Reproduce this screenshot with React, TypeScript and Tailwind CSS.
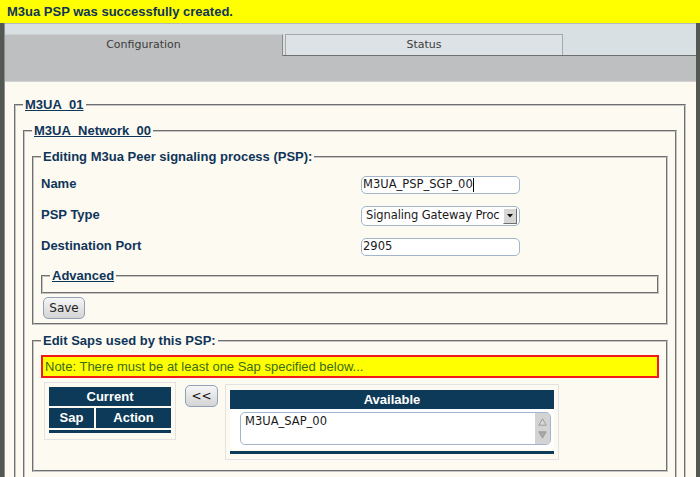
import React from "react";

function Legend({ children, link }: { children: React.ReactNode; link?: boolean }) {
  return (
    <legend
      className={
        link
          ? "px-[2px] text-[13px] leading-[15px] font-bold text-[#0f3559] underline"
          : "px-[2px] text-[13px] leading-[15px] font-bold text-[#0f3559]"
      }
    >
      {children}
    </legend>
  );
}

const fs = "border-2 [border-style:groove] border-[#c4c4c4] min-w-0";

function Label({ children }: { children: React.ReactNode }) {
  return (
    <div className="flex items-center pb-[2px] text-[13px] leading-[15px] font-bold text-[#0f3559]">
      {children}
    </div>
  );
}

export default function App() {
  return (
    <div className="w-[700px] h-[477px] overflow-hidden bg-[#545853] font-['Liberation_Sans',Arial,sans-serif] flex flex-col">
      <div className="h-[23px] shrink-0 bg-[#ffff00] pl-[7px] text-[13px] leading-[24px] font-bold text-[#0f3559]">
        M3ua PSP was successfully created.
      </div>
      <div className="mx-[4px] flex-1 flex flex-col border-l border-[#8f8f8f] min-h-0">
        {/* tab strip */}
        <div className="h-[33px] shrink-0 bg-[#d9e0e3] border-t border-[#b3b8ba] flex items-end">
          <div className="w-[278px] h-[22px] bg-[#bebfc0] border-t border-r border-t-[#d0d0d0] border-r-[#8a8a8a] flex items-center justify-center font-['DejaVu_Sans',sans-serif] text-[11px] text-[#3c3c3c]">
            Configuration
          </div>
          <div className="flex-1 h-[22px] flex items-end border-b border-[#6f6f6f]">
            <div className="ml-[2px] w-[278px] h-[21px] bg-[#dce2e5] border-t border-l border-r border-[#a9a9a9] flex items-center justify-center font-['DejaVu_Sans',sans-serif] text-[11px] text-[#3c3c3c]">
              Status
            </div>
          </div>
        </div>
        <div className="h-[26px] shrink-0 bg-[#bebfc0] border-b border-[#d2d2d2]" />
        {/* content */}
        <div className="flex-1 bg-[#fdfaf2] pt-[15px] pl-[9px] pr-[10px] min-h-0">
          <fieldset className={fs + " px-[7px] pt-[11px] pb-[10px]"}>
            <Legend link>M3UA_01</Legend>
            <fieldset className={fs + " px-[7px] pt-[11px] pb-[10px]"}>
              <Legend link>M3UA_Network_00</Legend>
              <fieldset className={fs + " px-[7px] pt-[5px] pb-[4px]"}>
                <Legend>Editing M3ua Peer signaling process (PSP):</Legend>
                <div className="grid grid-cols-[320px_159px] auto-rows-[31px]">
                  <Label>Name</Label>
                  <div className="flex items-center">
                    <div className="w-[159px] h-[18px] rounded-[5px] border border-[#a3b5c9] bg-white pl-[1px] flex items-center font-['DejaVu_Sans',sans-serif] text-[11.5px] text-[#1a1a1a] whitespace-nowrap">
                      M3UA_PSP_SGP_00
                      <span className="inline-block w-px h-[14px] bg-black" />
                    </div>
                  </div>
                  <Label>PSP Type</Label>
                  <div className="flex items-center">
                    <div className="w-[159px] h-[20px] rounded-[5px] border border-[#a3b5c9] bg-white flex items-center font-['DejaVu_Sans',sans-serif] text-[11.5px] text-[#1a1a1a]">
                      <span className="flex-1 whitespace-nowrap pl-[4px] tracking-[-0.1px]">
                        Signaling Gateway Proc
                      </span>
                      <span className="mr-[2px] shrink-0 w-[14px] h-[16px] bg-[#d6d6d6] border border-t-white border-l-white border-r-[#6f6f6f] border-b-[#6f6f6f] flex items-center justify-center">
                        <svg width="6" height="4" viewBox="0 0 6 4">
                          <polygon points="0,0 6,0 3,3.5" fill="#111" />
                        </svg>
                      </span>
                    </div>
                  </div>
                  <Label>Destination Port</Label>
                  <div className="flex items-center">
                    <div className="w-[159px] h-[18px] rounded-[5px] border border-[#a3b5c9] bg-white pl-[1px] flex items-center font-['DejaVu_Sans',sans-serif] text-[11.5px] text-[#1a1a1a]">
                      2905
                    </div>
                  </div>
                </div>
                <fieldset className={fs + " mt-[6px] px-[7px] pb-[9px]"}>
                  <Legend link>Advanced</Legend>
                </fieldset>
                <button className="mt-[3px] ml-[2px] w-[42px] h-[22px] rounded-[5px] border border-[#8ea2b8] bg-linear-to-b from-[#f6f6f6] to-[#d4d4d4] font-['DejaVu_Sans',sans-serif] text-[12px] text-[#222] flex items-center justify-center">
                  Save
                </button>
              </fieldset>
              <fieldset className={fs + " mt-[8px] px-[7px] pt-[7px] pb-[10px]"}>
                <Legend>Edit Saps used by this PSP:</Legend>
                <div className="h-[23px] border-2 border-[#f21b1b] bg-[#ffff00] pl-[2px] text-[13px] leading-[19px] text-[#3a6b1a] whitespace-nowrap">
                  Note: There must be at least one Sap specified below...
                </div>
                <div className="mt-[4px] pl-[3px] flex items-start">
                  {/* Current */}
                  <div className="w-[132px] h-[58px] border border-[#e2e2e2] p-[4px]">
                    <div className="h-[19px] bg-[#0d3a58] text-white font-bold text-[13px] leading-[19px] text-center">
                      Current
                    </div>
                    <div className="mt-[2px] h-[20px] flex gap-[2px]">
                      <div className="w-[45px] bg-[#0d3a58] text-white font-bold text-[13px] leading-[20px] text-center">
                        Sap
                      </div>
                      <div className="flex-1 bg-[#0d3a58] text-white font-bold text-[13px] leading-[20px] text-center">
                        Action
                      </div>
                    </div>
                    <div className="mt-[2px] h-[3px] bg-[#0d3a58]" />
                  </div>
                  {/* << */}
                  <button className="ml-[9px] mt-[3px] w-[33px] h-[22px] rounded-[5px] border border-[#8ea2b8] bg-linear-to-b from-[#f6f6f6] to-[#d4d4d4] font-['DejaVu_Sans',sans-serif] text-[12px] text-[#111] flex items-center justify-center">
                    &lt;&lt;
                  </button>
                  {/* Available */}
                  <div className="ml-[7px] mt-[2px] w-[334px] h-[76px] border border-[#e2e2e2] px-[4px] pt-[5px]">
                    <div className="h-[19px] bg-[#0d3a58] text-white font-bold text-[13px] leading-[19px] text-center">
                      Available
                    </div>
                    <div className="h-[40px] bg-white pt-[3px] pl-[10px] pr-[3px]">
                      <div className="h-[33px] rounded-[5px] border border-[#a3b5c9] bg-white overflow-hidden flex">
                        <div className="flex-1 pl-[4px] pt-[1px] font-['DejaVu_Sans',sans-serif] text-[11.5px] leading-[14px] text-[#1a1a1a]">
                          M3UA_SAP_00
                        </div>
                        <div className="w-[15px] bg-[#d3d3d3] flex flex-col items-center justify-around py-[2px]">
                          <svg width="9" height="8" viewBox="0 0 9 8">
                            <polygon points="4.5,0.8 8.2,7.2 0.8,7.2" fill="#d8d8d8" stroke="#9c9c9c" strokeWidth="1" />
                          </svg>
                          <svg width="9" height="8" viewBox="0 0 9 8">
                            <polygon points="0.8,0.8 8.2,0.8 4.5,7.2" fill="#a9a9a9" stroke="#9c9c9c" strokeWidth="1" />
                          </svg>
                        </div>
                      </div>
                    </div>
                    <div className="mt-[2px] h-[3px] bg-[#0d3a58]" />
                  </div>
                </div>
              </fieldset>
            </fieldset>
          </fieldset>
        </div>
      </div>
    </div>
  );
}
